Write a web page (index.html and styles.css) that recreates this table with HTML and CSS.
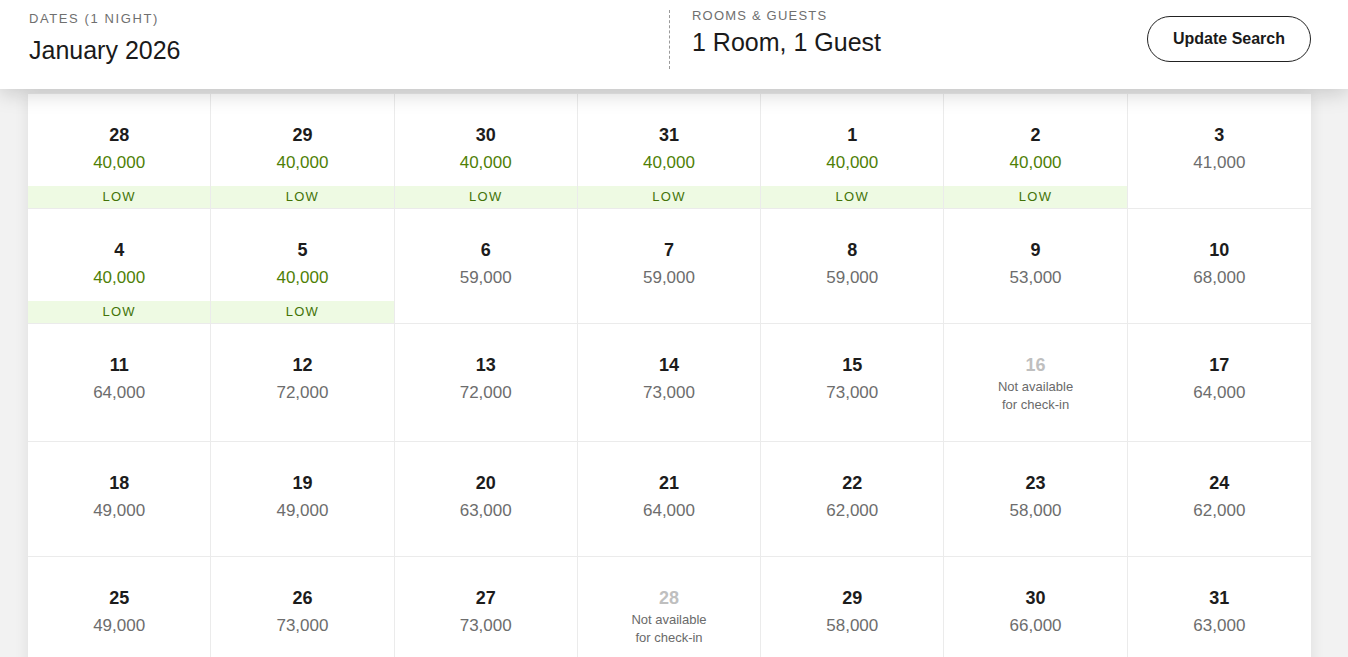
FILE: index.html
```html
<!DOCTYPE html>
<html lang="en">
<head>
<meta charset="utf-8">
<title>Rates calendar</title>
<link rel="stylesheet" href="styles.css">
</head>
<body>
<header class="search-bar">
  <div class="field field-dates">
    <div class="field-label">Dates (1 Night)</div>
    <div class="field-value">January 2026</div>
  </div>
  <div class="field field-rooms">
    <div class="field-label field-label-sm">Rooms &amp; Guests</div>
    <div class="field-value field-value-sm">1 Room, 1 Guest</div>
  </div>
  <button class="update-btn" type="button">Update Search</button>
</header>

<main class="calendar">
  <div class="cell low"><div class="cell-body"><div class="day">28</div><div class="price">40,000</div></div><div class="band">LOW</div></div>
  <div class="cell low"><div class="cell-body"><div class="day">29</div><div class="price">40,000</div></div><div class="band">LOW</div></div>
  <div class="cell low"><div class="cell-body"><div class="day">30</div><div class="price">40,000</div></div><div class="band">LOW</div></div>
  <div class="cell low"><div class="cell-body"><div class="day">31</div><div class="price">40,000</div></div><div class="band">LOW</div></div>
  <div class="cell low"><div class="cell-body"><div class="day">1</div><div class="price">40,000</div></div><div class="band">LOW</div></div>
  <div class="cell low"><div class="cell-body"><div class="day">2</div><div class="price">40,000</div></div><div class="band">LOW</div></div>
  <div class="cell"><div class="cell-body"><div class="day">3</div><div class="price">41,000</div></div><div class="band-empty"></div></div>

  <div class="cell low"><div class="cell-body"><div class="day">4</div><div class="price">40,000</div></div><div class="band">LOW</div></div>
  <div class="cell low"><div class="cell-body"><div class="day">5</div><div class="price">40,000</div></div><div class="band">LOW</div></div>
  <div class="cell"><div class="cell-body"><div class="day">6</div><div class="price">59,000</div></div><div class="band-empty"></div></div>
  <div class="cell"><div class="cell-body"><div class="day">7</div><div class="price">59,000</div></div><div class="band-empty"></div></div>
  <div class="cell"><div class="cell-body"><div class="day">8</div><div class="price">59,000</div></div><div class="band-empty"></div></div>
  <div class="cell"><div class="cell-body"><div class="day">9</div><div class="price">53,000</div></div><div class="band-empty"></div></div>
  <div class="cell"><div class="cell-body"><div class="day">10</div><div class="price">68,000</div></div><div class="band-empty"></div></div>

  <div class="cell"><div class="cell-body"><div class="day">11</div><div class="price">64,000</div></div><div class="band-empty"></div></div>
  <div class="cell"><div class="cell-body"><div class="day">12</div><div class="price">72,000</div></div><div class="band-empty"></div></div>
  <div class="cell"><div class="cell-body"><div class="day">13</div><div class="price">72,000</div></div><div class="band-empty"></div></div>
  <div class="cell"><div class="cell-body"><div class="day">14</div><div class="price">73,000</div></div><div class="band-empty"></div></div>
  <div class="cell"><div class="cell-body"><div class="day">15</div><div class="price">73,000</div></div><div class="band-empty"></div></div>
  <div class="cell na"><div class="cell-body"><div class="day">16</div><div class="na-text">Not available<br>for check-in</div></div><div class="band-empty"></div></div>
  <div class="cell"><div class="cell-body"><div class="day">17</div><div class="price">64,000</div></div><div class="band-empty"></div></div>

  <div class="cell"><div class="cell-body"><div class="day">18</div><div class="price">49,000</div></div><div class="band-empty"></div></div>
  <div class="cell"><div class="cell-body"><div class="day">19</div><div class="price">49,000</div></div><div class="band-empty"></div></div>
  <div class="cell"><div class="cell-body"><div class="day">20</div><div class="price">63,000</div></div><div class="band-empty"></div></div>
  <div class="cell"><div class="cell-body"><div class="day">21</div><div class="price">64,000</div></div><div class="band-empty"></div></div>
  <div class="cell"><div class="cell-body"><div class="day">22</div><div class="price">62,000</div></div><div class="band-empty"></div></div>
  <div class="cell"><div class="cell-body"><div class="day">23</div><div class="price">58,000</div></div><div class="band-empty"></div></div>
  <div class="cell"><div class="cell-body"><div class="day">24</div><div class="price">62,000</div></div><div class="band-empty"></div></div>

  <div class="cell"><div class="cell-body"><div class="day">25</div><div class="price">49,000</div></div><div class="band-empty"></div></div>
  <div class="cell"><div class="cell-body"><div class="day">26</div><div class="price">73,000</div></div><div class="band-empty"></div></div>
  <div class="cell"><div class="cell-body"><div class="day">27</div><div class="price">73,000</div></div><div class="band-empty"></div></div>
  <div class="cell na"><div class="cell-body"><div class="day">28</div><div class="na-text">Not available<br>for check-in</div></div><div class="band-empty"></div></div>
  <div class="cell"><div class="cell-body"><div class="day">29</div><div class="price">58,000</div></div><div class="band-empty"></div></div>
  <div class="cell"><div class="cell-body"><div class="day">30</div><div class="price">66,000</div></div><div class="band-empty"></div></div>
  <div class="cell"><div class="cell-body"><div class="day">31</div><div class="price">63,000</div></div><div class="band-empty"></div></div>
</main>
</body>
</html>
```

FILE: styles.css
```css
* { box-sizing: border-box; }

html, body {
  margin: 0;
  padding: 0;
  background: #f2f2f2;
  font-family: "Liberation Sans", Arial, sans-serif;
  color: #1c1c1c;
}

body { overflow: hidden; height: 657px; }

.search-bar {
  position: relative;
  z-index: 2;
  display: flex;
  align-items: flex-start;
  height: 89px;
  padding: 10px 37px 0 29px;
  background: #fff;
  box-shadow: 0 4px 20px rgba(0, 0, 0, 0.18);
}

.field-dates {
  width: 640px;
  padding-top: 1px;
}

.field-label {
  font-size: 13px;
  line-height: 16px;
  letter-spacing: 1.6px;
  text-transform: uppercase;
  color: #6f6f6f;
}

.field-value {
  margin-top: 8px;
  font-size: 25px;
  line-height: 30px;
  color: #1a1a1a;
}

.field-rooms {
  height: 59px;
  border-left: 1px dashed #9a9a9a;
  padding-left: 22px;
}

.field-label-sm {
  font-size: 13px;
  line-height: 12px;
  letter-spacing: 1.2px;
}

.field-value-sm {
  margin-top: 6px;
  font-size: 25px;
  line-height: 29px;
}

.update-btn {
  margin-left: auto;
  margin-top: 6px;
  width: 164px;
  height: 46px;
  border: 1px solid #222;
  border-radius: 23px;
  background: #fff;
  font-family: "Liberation Sans", Arial, sans-serif;
  font-size: 16px;
  font-weight: 700;
  color: #1a1a1a;
  padding: 0;
}

.calendar {
  position: relative;
  z-index: 1;
  display: grid;
  grid-template-columns: repeat(7, 1fr);
  width: 1283px;
  margin: 4px 0 0 28px;
  background: #fff;
  border-top: 1px solid #ebebeb;
  box-shadow: 0 0 14px rgba(0, 0, 0, 0.09);
}

.cell {
  display: flex;
  flex-direction: column;
  min-height: 115px;
  padding-top: 29px;
  border-right: 1px solid #ebebeb;
  border-bottom: 1px solid #ebebeb;
  text-align: center;
}

.cell:nth-child(7n) { border-right: none; }

.cell-body { padding-bottom: 5px; }

.day {
  font-size: 18px;
  line-height: 24px;
  font-weight: 700;
  color: #1c1c1c;
}

.price {
  margin-top: 4px;
  font-size: 17px;
  line-height: 24px;
  color: #6d6d6d;
}

.low .price { color: #4f7f06; }

.band,
.band-empty {
  margin-top: auto;
  height: 22px;
}

.band {
  background: #eefae3;
  font-size: 13px;
  line-height: 22px;
  letter-spacing: 1.3px;
  color: #437308;
}

.na .day { color: #bfbfbf; }

.na-text {
  margin-top: 1px;
  font-size: 13px;
  line-height: 18px;
  color: #6a6a6a;
}
```
